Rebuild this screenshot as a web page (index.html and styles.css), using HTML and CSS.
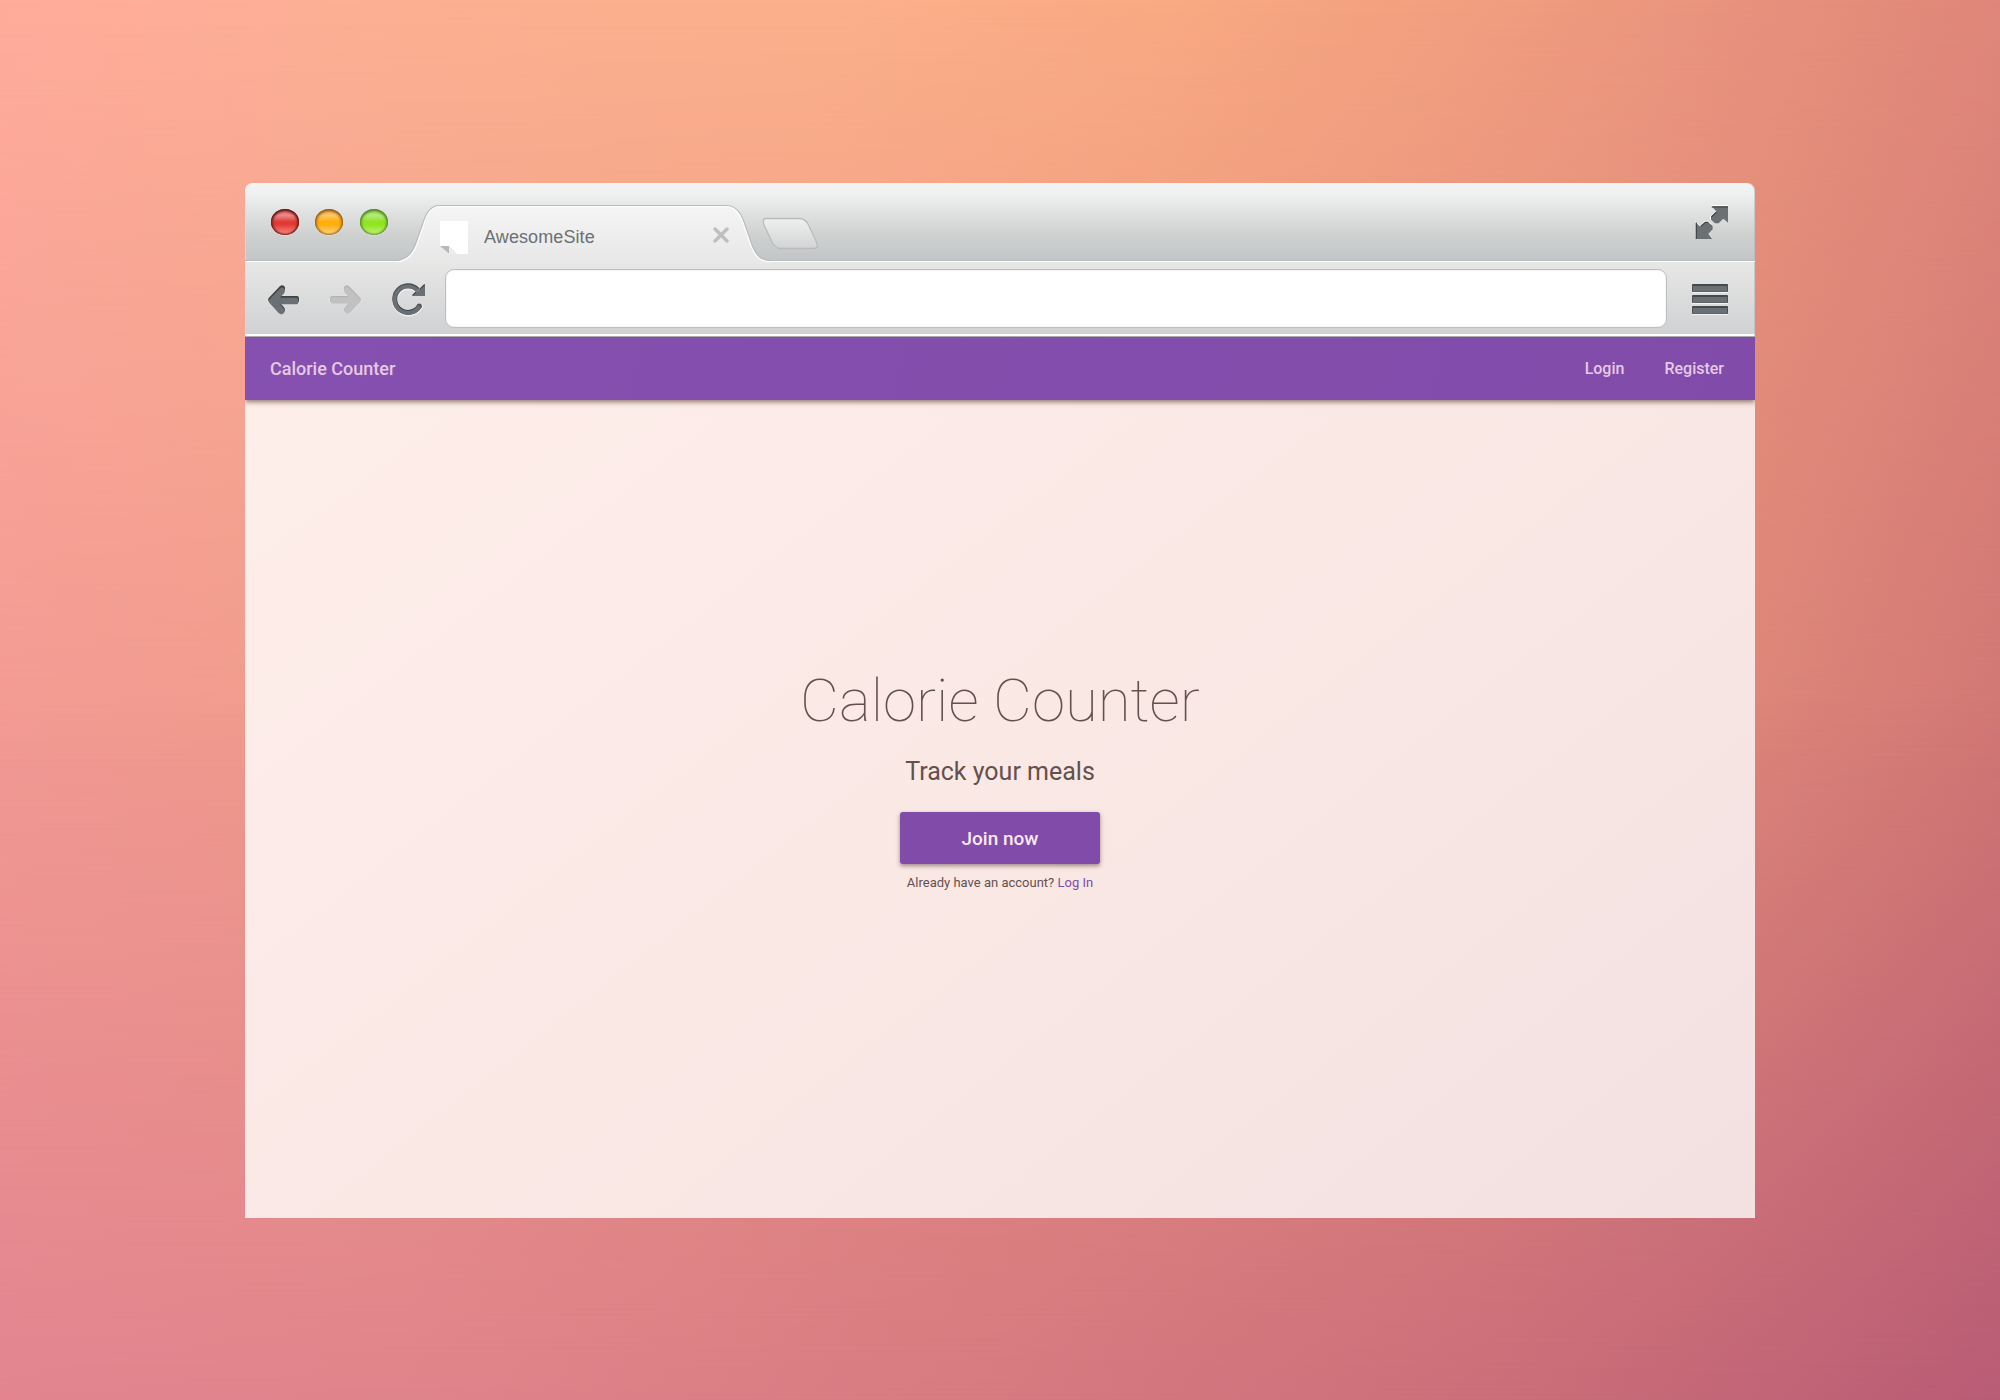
FILE: index.html
```html
<!DOCTYPE html>
<html lang="en">
<head>
<meta charset="utf-8">
<title>Calorie Counter</title>
<link rel="stylesheet" href="styles.css">
</head>
<body>
<main class="window">
  <header class="titlebar">
    <div class="lights">
      <span class="light light-red"></span>
      <span class="light light-amber"></span>
      <span class="light light-green"></span>
    </div>
    <div class="tab">
      <svg class="tab-shape" width="376" height="60" viewBox="0 0 376 60">
        <defs>
          <linearGradient id="tabFill" x1="0" y1="0" x2="0" y2="1"><stop offset="0" stop-color="#f5f5f5"/><stop offset="1" stop-color="#e7e7e7"/></linearGradient>
        </defs>
        <path d="M0 57.500C12 57.500 18 50 22 40L31 16C35 6 40 2.500 46 2.500H331C340 2.500 345 10 348 19L356 42C360 51 365 57.500 376 57.500V60H0Z" fill="url(#tabFill)"/>
        <path d="M0 56.500C11 56.500 17 50 21 39L29 16C33 5 38 1.500 44 1.500H331C341 1.500 346 9 349 18L357 41C361 51 366 56.500 376 56.500" fill="none" stroke="#b9babb" stroke-width="1.200"/>
        <path d="M0 57.800C12 57.800 18 51 22 40L30 17C34 6 39 2.700 45 2.700H331C340 2.700 345 10 348 19L356 42C360 52 365 57.800 376 57.800" fill="none" stroke="#fcfcfc" stroke-width="1.300"/>
      </svg>
      <svg class="favicon" width="28" height="33" viewBox="0 0 28 33"><path d="M0 0H28V33H17L9 25H0Z" fill="#fff"/><path d="M0 25H9V32.500Z" fill="#b9b9b9"/><path d="M9 25L17 33H9Z" fill="#ececec"/></svg>
      <span class="tab-title">AwesomeSite</span>
      <svg class="tab-close" width="16" height="16" viewBox="0 0 16 16"><path d="M2 2L14 14M14 2L2 14" stroke="#bfbfbf" stroke-width="3.400" stroke-linecap="round"/></svg>
    </div>
    <svg class="new-tab" width="56" height="33" viewBox="0 0 56 33">
      <defs><linearGradient id="newTab" x1="0" y1="0" x2="0" y2="1"><stop offset="0" stop-color="#efefef"/><stop offset="1" stop-color="#d2d4d5"/></linearGradient></defs>
      <path d="M4 1.500H37C42 1.500 44 3.500 46 7L54 24C56 29 56 31.500 52 31.500H19C15 31.500 13 30 10.500 26L2.500 9C1 5 0 1.500 4 1.500Z" fill="url(#newTab)" stroke="#bbb" stroke-width="1.300"/>
    </svg>
    <svg class="expand" width="34" height="35" viewBox="0 0 34 35">
      <defs>
        <path id="expandShape" d="M16.700 1.500H33V17.700L28.300 13.800L23.500 18.200H20L16 14.800V12.300L21.700 6.700ZM.8 17.500V34H17.300L13.300 28.800L17.700 24.300V20.700L13.300 17.200H10.300L5.300 21.700Z"/>
      </defs>
      <use href="#expandShape" fill="#fff" stroke="#fff" transform="translate(-.5 -.8)"/>
      <use href="#expandShape" fill="#6b7073"/>
      <path d="M16.700 1.800H33M21.700 6.700L16.300 12M1.300 17.500V34M5.500 21.500L10.300 17.400H13.300" fill="none" stroke="#3f4145" stroke-width="1.200"/>
    </svg>
  </header>
  <div class="toolbar">
    <svg class="arrow" width="35" height="35" viewBox="0 0 35 35">
      <defs>
        <path id="arrowShape" d="M2.700 15L13.800 3.300Q16 1.200 18.200 3Q20.300 5.300 18.700 7.700L14 12.900H31Q33 12.900 33 14.900V17.800Q33 19.800 31 19.800H14L18 24.300Q20 27 17.800 29.200Q15.500 31.300 13 29.500L2.700 18.200Q1.200 16.500 2.700 15Z"/>
      </defs>
      <use href="#arrowShape" fill="#f4f4f4" stroke="#f0f0f0" transform="translate(0 .7)"/>
      <use href="#arrowShape" fill="#3f4348"/>
      <use href="#arrowShape" fill="#6b7074" transform="translate(.6 2.300) scale(.96)"/>
    </svg>
    <svg class="arrow" width="35" height="35" viewBox="0 0 35 35">
      <g transform="translate(35 0) scale(-1 1)">
        <use href="#arrowShape" fill="#efefef" stroke="#efefef" transform="translate(0 .5)"/>
        <use href="#arrowShape" fill="#b2b3b4"/>
        <use href="#arrowShape" fill="#c1c1c1" transform="translate(.6 1.800) scale(.96)"/>
      </g>
    </svg>
    <svg class="reload" width="36" height="35" viewBox="0 0 36 35" fill="none">
      <path d="M28.900 22.800A13.300 13.300 0 1 1 26.700 6.900" stroke="#f2f2f2" stroke-width="6" stroke-linecap="round" transform="translate(0 .8)"/>
      <path d="M28.700 22.500A13.300 13.300 0 1 1 26.700 6.900" stroke="#43474b" stroke-width="5"/>
      <circle cx="28.300" cy="23" r="2.600" fill="#55595d"/>
      <path d="M28.500 23.200A13.300 13.300 0 1 1 26.700 7.600" stroke="#6b7074" stroke-width="3.800"/>
      <path d="M34 1.300V12.900H21.200L25 9L28.500 6.500Z" fill="#6b7074"/>
      <path d="M21.500 12.500L25 9M28.500 6.500L33.700 1.500" stroke="#43474b" stroke-width="1.200"/>
    </svg>
    <div class="address"></div>
    <div class="menu"><span class="menu-bar"></span><span class="menu-bar"></span><span class="menu-bar"></span></div>
  </div>
  <nav class="nav">
    <span class="brand">Calorie Counter</span>
    <span class="nav-link">Login</span>
    <span class="nav-link">Register</span>
  </nav>
  <section class="hero">
    <h1 class="hero-title">Calorie Counter</h1>
    <p class="hero-sub">Track your meals</p>
    <button class="join">Join now</button>
    <p class="account">Already have an account? <a class="account-link">Log In</a></p>
  </section>
</main>
</body>
</html>
```
FILE: styles.css
```css
* { box-sizing: border-box; }

body {
  margin: 0;
  width: 2000px;
  height: 1400px;
  padding: 183px 245px 182px;
  position: relative;
  isolation: isolate;
  overflow: hidden;
  font-family: Roboto, sans-serif;
  background: linear-gradient(90deg, #ffac9c 0%, #fcb092 20%, #fcb08b 42%, #f9aa82 58%, #f09d80 75%, #df877a 100%);
}

/* The backdrop blends three horizontal colour rows from top to bottom. */
body::before,
body::after {
  content: "";
  position: absolute;
  z-index: -1;
  inset: 0;
}

body::before {
  background: linear-gradient(90deg, #f29a93 0%, #ef9a8c 15%, #e88f82 50%, #de887a 85%, #d07774 100%);
  mask-image: linear-gradient(180deg, transparent 0%, #000 55%);
}

body::after {
  background: linear-gradient(90deg, #e3848f 0%, #e0848b 20%, #d67a80 50%, #cb6e79 75%, #b85c75 100%);
  mask-image: linear-gradient(180deg, transparent 50%, #000 100%);
}

.window {
  display: flex;
  flex-direction: column;
  width: 1510px;
  height: 1035px;
}

.titlebar {
  display: flex;
  align-items: flex-start;
  height: 78px;
  padding: 0 26px;
  border-radius: 8px 8px 0 0;
  border-bottom: 1px solid #bcbdbf;
  background: linear-gradient(180deg, #f4f4f4 0%, #eff0f0 14%, #dfe1e0 40%, #cfd1d0 68%, #c3c6c8 100%);
  box-shadow: inset 1px 0 rgba(255, 255, 255, .4), inset -1px 0 rgba(175, 175, 175, .5);
}

.lights { display: flex; margin-top: 26px; }

.light { width: 28px; height: 26px; border-radius: 50%; }

.light-red {
  background: linear-gradient(#d77 0%, #e88 25%, #dd3932 50%, #e43a32 60%, #f39490 100%);
  box-shadow: inset 0 1px 3px 1px #5d1010, inset 0 0 2px 1px #9c2b29, 0 1px #ddd;
}

.light-amber {
  margin-left: 16px;
  background: linear-gradient(#f0b850 0%, #fcc868 25%, #ffac08 50%, #ffb010 62%, #ffdb94 100%);
  box-shadow: inset 0 1px 3px 1px #935911, inset 0 0 2px 1px #b8852d, 0 1px #ddd;
}

.light-green {
  margin-left: 17px;
  background: linear-gradient(#a5df5d 0%, #b4ec78 25%, #90e222 50%, #93e61f 62%, #c5f384 100%);
  box-shadow: inset 0 1px 3px 1px #4e8027, inset 0 0 2px 1px #7bad4d, 0 1px #ddd;
}

.tab {
  position: relative;
  display: flex;
  width: 376px;
  height: 60px;
  margin: 21px 0 0 7px;
  padding-left: 45px;
}

.tab-shape { position: absolute; left: 0; top: 0; z-index: 0; }
.favicon, .tab-title, .tab-close { position: relative; z-index: 1; }
.favicon { margin-top: 17px; }

.tab-title {
  width: 114px;
  margin: 23px 0 0 16px;
  font: 18px/20px "Liberation Sans", Arial, sans-serif;
  letter-spacing: .1px;
  color: #6b7073;
}

.tab-close { margin: 23px 0 0 115px; }
.new-tab { margin: 34px 0 0 -9px; }
.expand { margin: 22px 0 0 auto; }

.toolbar {
  display: flex;
  align-items: flex-start;
  height: 76px;
  padding: 7px 27px 0 21px;
  border-top: 1px solid #fcfcfc;
  border-bottom: 1px solid #aaabac;
  background: linear-gradient(180deg, #e7e7e6, #d0d1d3 97%, #fff 98%);
  box-shadow: inset 1px 0 rgba(255, 255, 255, .4), inset -1px 0 rgba(175, 175, 175, .5);
}

.arrow { margin: 14px 27px 0 0; }
.reload { margin: 14px 18px 0 1px; }

.address {
  width: 1222px;
  height: 59px;
  border: 1px solid #bdbebf;
  border-radius: 9px;
  background: #fff;
  box-shadow: inset 0 0 0 1px #f6f6f6;
}

.menu { display: grid; gap: 3px; margin: 15px 0 0 auto; }

.menu-bar {
  width: 36px;
  height: 8px;
  border: 1px solid #4b4f53;
  border-top: 2px solid #45484d;
  border-bottom-color: #5f6366;
  border-radius: 1px;
  background: #6b7074;
  box-shadow: 0 1px #f3f3f3;
}

.nav {
  position: relative;
  display: flex;
  align-items: center;
  height: 63px;
  padding: 0 31px 0 25px;
  color: #e6c9e2;
  background: linear-gradient(105deg, #8550af, #814baa);
  box-shadow: 0 2px 5px rgba(70, 40, 30, .6);
  clip-path: inset(0 0 -12px 0);
  font-size: 16px;
  font-weight: 500;
}

.brand { margin-right: auto; font-size: 18px; }
.nav-link { margin-left: 40px; }

.hero {
  display: flex;
  flex: 1;
  flex-direction: column;
  align-items: center;
  padding-top: 266px;
  color: #64504d;
  background: linear-gradient(142deg, #feeee8 0%, #fcebe8 25%, #fae8e5 50%, #f3e1e2 100%);
}

.hero-title { margin: 0; font-size: 60px; line-height: 70px; font-weight: 100; }
.hero-sub { margin: 19px 0 0; font-size: 25px; line-height: 34px; }

.join {
  width: 200px;
  height: 52px;
  margin-top: 23px;
  border: 0;
  border-radius: 3px;
  color: #fae8f0;
  background: #814baa;
  box-shadow: 0 2px 4px rgba(70, 40, 40, .5);
  font: 500 19px/52px Roboto, sans-serif;
}

.account { margin: 9px 0 0; font-size: 13px; line-height: 20px; }
.account-link { color: #814baa; }
```
